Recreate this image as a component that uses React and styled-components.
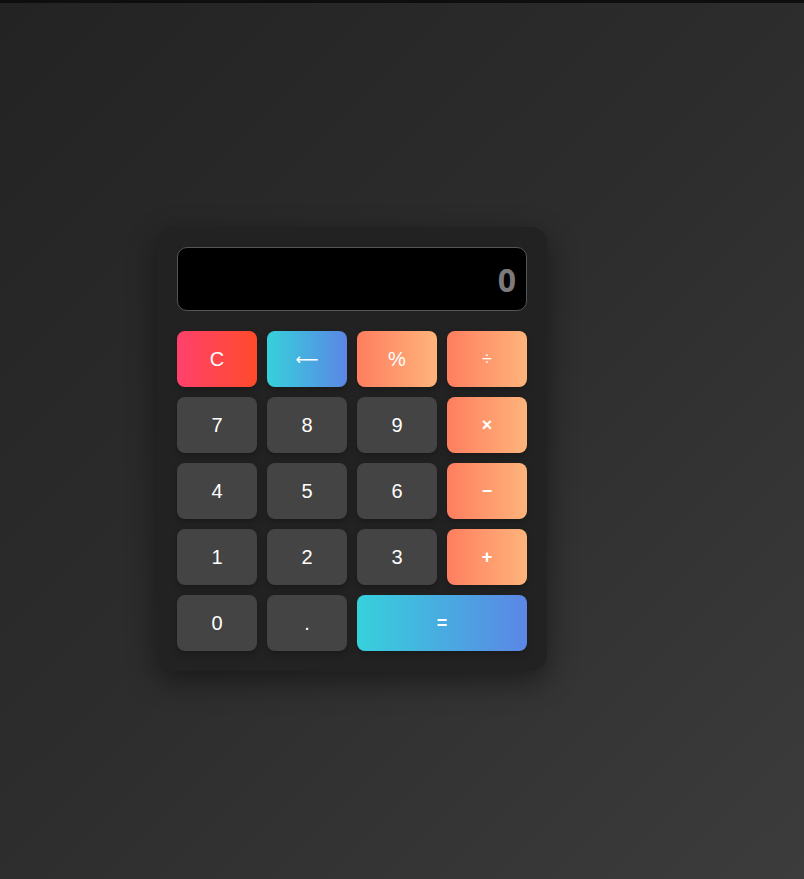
import React, { useState } from 'react';
import styled, { createGlobalStyle } from 'styled-components';

const GlobalStyle = createGlobalStyle`
  html, body {
    margin: 0;
    padding: 0;
    height: 100%;
  }

  body {
    min-height: 879px;
    background: linear-gradient(135deg, #232323 0%, #2d2d2d 50%, #3c3c3c 100%);
    border-top: 3px solid #0e0e0e;
    box-sizing: border-box;
    font-family: 'Liberation Sans', Arial, sans-serif;
  }
`;

const gradients = {
  clear: 'linear-gradient(90deg, #ff416c, #ff4b2b)',
  cool: 'linear-gradient(90deg, #36d1dc, #5b86e5)',
  warm: 'linear-gradient(90deg, #ff7e5f, #feb47b)',
  plain: '#444444',
};

const Page = styled.div`
  padding: 224px 0 0 157px;
`;

const Calculator = styled.div`
  width: 350px;
  padding: 20px;
  background: #222222;
  border-radius: 16px;
  box-shadow: 0 10px 30px rgba(0, 0, 0, 0.45);
`;

const Display = styled.div`
  height: 62px;
  margin-bottom: 20px;
  padding: 0 10px;
  background: #000;
  border: 1px solid #555;
  border-radius: 10px;
  display: flex;
  align-items: center;
  justify-content: flex-end;
  font-family: 'Open Sans', sans-serif;
  font-weight: 700;
  font-size: 32px;
  color: #7b7b7b;
`;

const Keys = styled.div`
  display: grid;
  grid-template-columns: repeat(4, 80px);
  grid-auto-rows: 56px;
  gap: 10px;
`;

const Key = styled.button`
  grid-column: span ${(p) => p.$span || 1};
  border: none;
  border-radius: 8px;
  background: ${(p) => gradients[p.$tone || 'plain']};
  color: #fff;
  font-family: ${(p) => (p.$symbol ? "'DejaVu Sans', sans-serif" : "'Liberation Sans', Arial, sans-serif")};
  font-size: ${(p) => p.$size || 20}px;
  font-weight: ${(p) => (p.$bold ? 700 : 400)};
  box-shadow: 0 3px 6px rgba(0, 0, 0, 0.25);
  cursor: pointer;
  padding: 0;
  display: flex;
  align-items: center;
  justify-content: center;
`;

const rows = [
  [
    { label: 'C', tone: 'clear' },
    { label: '⟵', tone: 'cool', size: 16, symbol: true },
    { label: '%', tone: 'warm' },
    { label: '÷', tone: 'warm', size: 18 },
  ],
  [{ label: '7' }, { label: '8' }, { label: '9' }, { label: '×', tone: 'warm', size: 18, bold: true }],
  [{ label: '4' }, { label: '5' }, { label: '6' }, { label: '−', tone: 'warm', size: 18, bold: true }],
  [{ label: '1' }, { label: '2' }, { label: '3' }, { label: '+', tone: 'warm', size: 18, bold: true }],
  [{ label: '0' }, { label: '.' }, { label: '=', tone: 'cool', span: 2, size: 18, bold: true }],
];

const App = () => {
  const [value] = useState('0');

  return (
    <Page>
      <GlobalStyle />
      <Calculator>
        <Display>{value}</Display>
        <Keys>
          {rows.flat().map((k) => (
            <Key
              key={k.label}
              $tone={k.tone}
              $span={k.span}
              $size={k.size}
              $bold={k.bold}
              $symbol={k.symbol}
            >
              {k.label}
            </Key>
          ))}
        </Keys>
      </Calculator>
    </Page>
  );
};

export default App;
